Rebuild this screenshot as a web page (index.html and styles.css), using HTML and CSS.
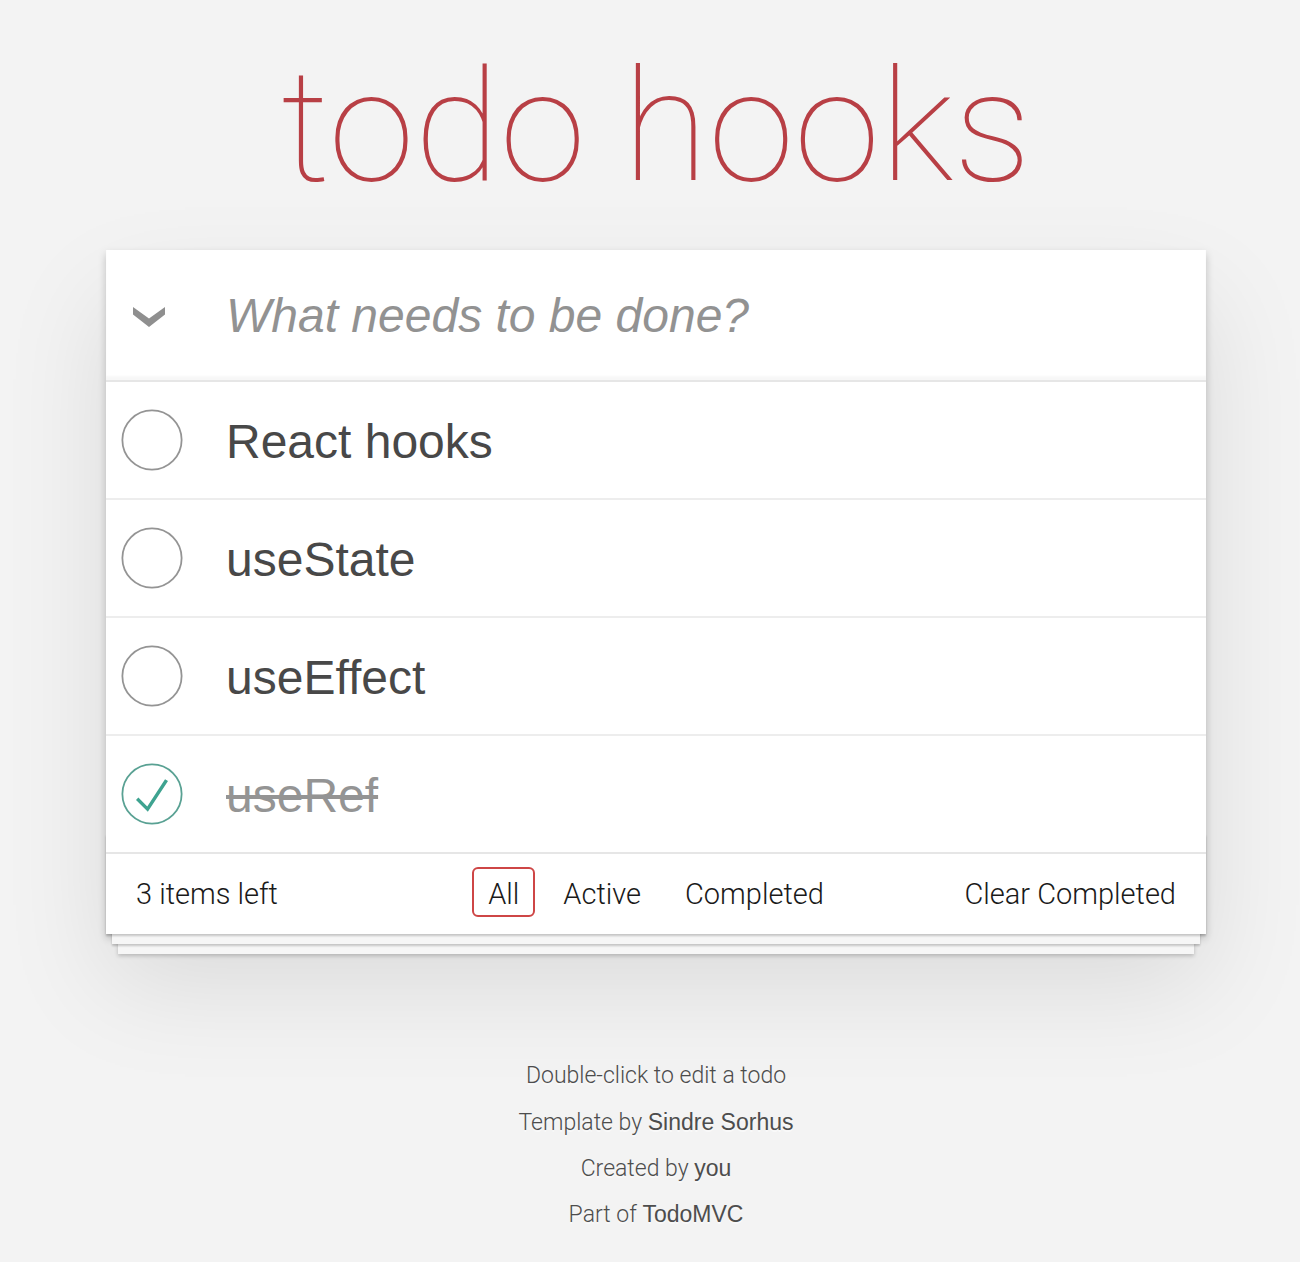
FILE: index.html
```html
<!DOCTYPE html>
<html lang="en">
<head>
<meta charset="utf-8">
<title>todo hooks</title>
<link rel="stylesheet" href="styles.css">
</head>
<body>
<div class="page">
  <h1 class="title">todo hooks</h1>
  <section class="todoapp">
    <header class="header">
      <span class="toggle-all">
        <svg width="32" height="21" viewBox="0 0 32 21"><polygon points="0,1 16,12.5 32,1 32,8.5 16,21 0,8.5" fill="#8f8f8f"/></svg>
      </span>
      <div class="new-todo">What needs to be done?</div>
    </header>
    <ul class="todo-list">
      <li class="todo">
        <svg class="toggle" width="64" height="64" viewBox="-4 -4 108 108"><circle cx="50" cy="50" r="50" fill="none" stroke="#949494" stroke-width="3"/></svg>
        <span class="todo-label">React hooks</span>
      </li>
      <li class="todo">
        <svg class="toggle" width="64" height="64" viewBox="-4 -4 108 108"><circle cx="50" cy="50" r="50" fill="none" stroke="#949494" stroke-width="3"/></svg>
        <span class="todo-label">useState</span>
      </li>
      <li class="todo">
        <svg class="toggle" width="64" height="64" viewBox="-4 -4 108 108"><circle cx="50" cy="50" r="50" fill="none" stroke="#949494" stroke-width="3"/></svg>
        <span class="todo-label">useEffect</span>
      </li>
      <li class="todo completed">
        <svg class="toggle" width="64" height="64" viewBox="-4 -4 108 108"><circle cx="50" cy="50" r="50" fill="none" stroke="#59A193" stroke-width="3"/><path fill="#3EA390" d="M72 25L42 71 27 56l-4 4 20 20 34-52z"/></svg>
        <span class="todo-label">useRef</span>
      </li>
    </ul>
    <footer class="footer">
      <span class="todo-count">3 items left</span>
      <ul class="filters">
        <li><a class="filter selected" href="#/">All</a></li>
        <li><a class="filter" href="#/active">Active</a></li>
        <li><a class="filter" href="#/completed">Completed</a></li>
      </ul>
      <button class="clear-completed">Clear Completed</button>
    </footer>
  </section>
  <footer class="info">
    <p>Double-click to edit a todo</p>
    <p>Template by <a href="#">Sindre Sorhus</a></p>
    <p>Created by <a href="#">you</a></p>
    <p>Part of <a href="#">TodoMVC</a></p>
  </footer>
</div>
</body>
</html>
```
FILE: styles.css
```css
html, body {
  margin: 0;
  padding: 0;
}

body {
  background: #f3f3f3;
  color: #111111;
  font-family: Roboto, "Liberation Sans", Arial, sans-serif;
  font-weight: 300;
  padding-left: 12px;
}

.page {
  width: 1100px;
  margin: 0 auto;
  padding-top: 47px;
}

.title {
  margin: 0;
  height: 159px;
  font-size: 156px;
  line-height: 160px;
  font-weight: 100;
  text-align: center;
  color: #b83f45;
}

.todoapp {
  position: relative;
  margin-top: 44px;
  background: #fff;
  box-shadow: 0 4px 8px 0 rgba(0, 0, 0, 0.2), 0 50px 100px 0 rgba(0, 0, 0, 0.1);
}

.header {
  display: flex;
  align-items: center;
  height: 130px;
  box-shadow: inset 0 -4px 2px rgba(0, 0, 0, 0.03);
}

.toggle-all {
  display: flex;
  width: 120px;
  padding-left: 27px;
  padding-top: 3px;
  box-sizing: border-box;
}

.toggle-all svg {
  display: block;
}

.new-todo {
  font-family: "Liberation Sans", Arial, sans-serif;
  font-style: italic;
  font-weight: 400;
  font-size: 48px;
  line-height: 67px;
  color: #929292;
  margin-top: 0;
}

.todo-list {
  list-style: none;
  margin: 0;
  padding: 0;
  border-top: 2px solid #e6e6e6;
}

.todo {
  display: flex;
  align-items: center;
  border-bottom: 2px solid #ededed;
}

.todo:last-child {
  border-bottom: none;
}

.toggle {
  display: block;
  flex: none;
  margin-left: 14px;
}

.todo-label {
  display: block;
  margin-left: 42px;
  padding: 32px 0 28px;
  font-family: "Liberation Sans", Arial, sans-serif;
  font-weight: 400;
  font-size: 48px;
  line-height: 56px;
  color: #484848;
}

.completed .todo-label {
  color: #949494;
  text-decoration: line-through;
}

.footer {
  display: grid;
  grid-template-columns: 1fr auto 1fr;
  align-items: baseline;
  height: 40px;
  padding: 20px 30px;
  border-top: 2px solid #e6e6e6;
  font-size: 29px;
  line-height: 40px;
  color: #1a1a1a;
}

.footer::before {
  content: "";
  position: absolute;
  right: 0;
  bottom: 0;
  left: 0;
  height: 100px;
  overflow: hidden;
  box-shadow: 0 2px 2px rgba(0, 0, 0, 0.2),
    0 16px 0 -6px #f6f6f6,
    0 18px 2px -6px rgba(0, 0, 0, 0.2),
    0 32px 0 -12px #f6f6f6,
    0 34px 4px -12px rgba(0, 0, 0, 0.2);
  pointer-events: none;
}

.todo-count {
  justify-self: start;
}

.filters {
  display: flex;
  align-items: baseline;
  list-style: none;
  margin: -7px 0 0;
  padding: 0;
}

.filter {
  display: inline-block;
  margin: 0 6px;
  padding: 8px 14px 4px;
  line-height: 34px;
  border: 2px solid transparent;
  border-radius: 6px;
  color: inherit;
  text-decoration: none;
}

.filter.selected {
  border-color: #ce4646;
}

.clear-completed {
  justify-self: end;
  margin: 0;
  padding: 0;
  border: none;
  background: none;
  font: inherit;
  color: inherit;
  line-height: 38px;
  cursor: pointer;
}

.info {
  margin-top: 130px;
  text-align: center;
  font-size: 23px;
  color: #4d4d4d;
  text-shadow: 0 2px 0 rgba(255, 255, 255, 0.5);
}

.info p {
  margin: 22px 0;
  height: 24px;
  line-height: 24px;
}

.info p:first-child {
  margin-top: 0;
}

.info a {
  font-family: "Liberation Sans", Arial, sans-serif;
  font-weight: 400;
  color: inherit;
  text-decoration: none;
}
```
